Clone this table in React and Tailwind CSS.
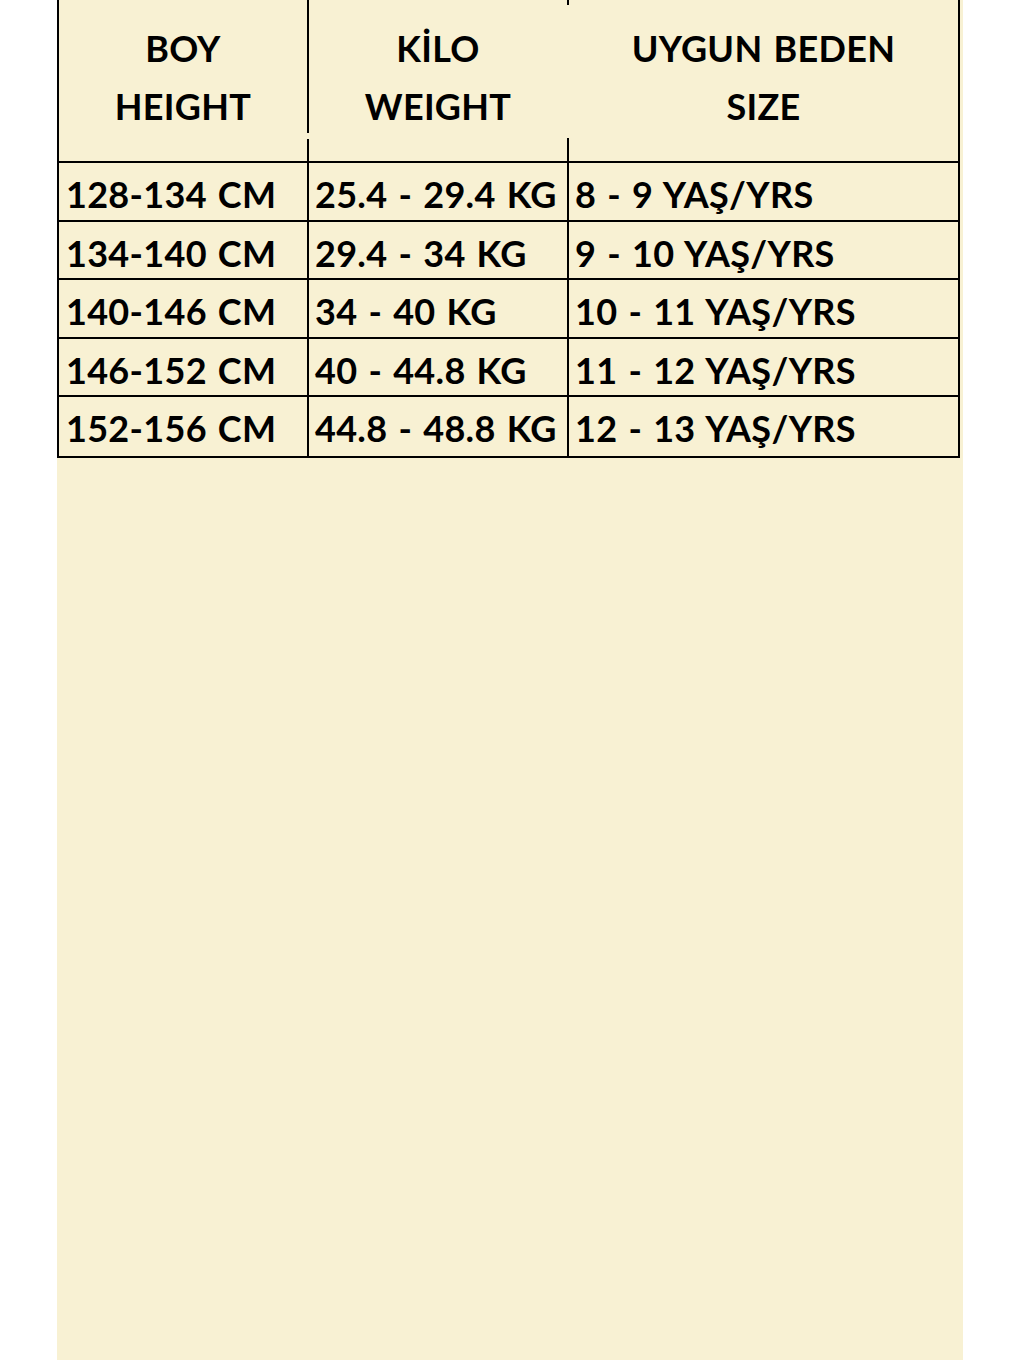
import React from "react";

const rows = [
  ["128-134 CM", "25.4 - 29.4 KG", "8 - 9 YAŞ/YRS"],
  ["134-140 CM", "29.4 - 34 KG", "9 - 10 YAŞ/YRS"],
  ["140-146 CM", "34 - 40 KG", "10 - 11 YAŞ/YRS"],
  ["146-152 CM", "40 - 44.8 KG", "11 - 12 YAŞ/YRS"],
  ["152-156 CM", "44.8 - 48.8 KG", "12 - 13 YAŞ/YRS"],
];

const HeadCell = ({ top, bottom, className }) => (
  <div className={`flex flex-col items-center justify-center pb-2 leading-[58px] ${className}`}>
    <span>{top}</span>
    <span>{bottom}</span>
  </div>
);

const App = () => {
  return (
    <div
      className="w-full h-[1360px] bg-white"
      style={{ fontFamily: "Lato, 'Open Sans', sans-serif" }}
    >
      <div className="ml-[57px] w-[906px] h-full bg-[#f8f1d3]">
        <div className="w-[903px] border-l-2 border-r-2 border-b-2 border-black text-black font-bold text-[36px] tracking-[0.3px] [word-spacing:2px]">
          {/* header */}
          <div className="flex h-[163px] border-b-2 border-black">
            <HeadCell top="BOY" bottom="HEIGHT" className="w-[248px]" />
            <div className="w-[2px] flex flex-col">
              <div className="h-[133px] bg-black" />
              <div className="h-[6px]" />
              <div className="flex-1 bg-black" />
            </div>
            <HeadCell top="KİLO" bottom="WEIGHT" className="w-[258px]" />
            <div className="w-[2px] flex flex-col">
              <div className="h-[5px] bg-black" />
              <div className="h-[133px]" />
              <div className="flex-1 bg-black" />
            </div>
            <HeadCell top="UYGUN BEDEN" bottom="SIZE" className="flex-1" />
          </div>
          {rows.map((r, i) => (
            <div
              key={i}
              className={`grid grid-cols-[250px_260px_1fr] h-[58.5px] ${i < rows.length - 1 ? "border-b-2 border-black" : ""}`}
            >
              <div className="pl-[7px] flex items-center pt-1 border-r-2 border-black whitespace-nowrap">{r[0]}</div>
              <div className="pl-[6px] flex items-center pt-1 border-r-2 border-black whitespace-nowrap">{r[1]}</div>
              <div className="pl-[6px] flex items-center pt-1 whitespace-nowrap">{r[2]}</div>
            </div>
          ))}
        </div>
      </div>
    </div>
  );
};

export default App;
